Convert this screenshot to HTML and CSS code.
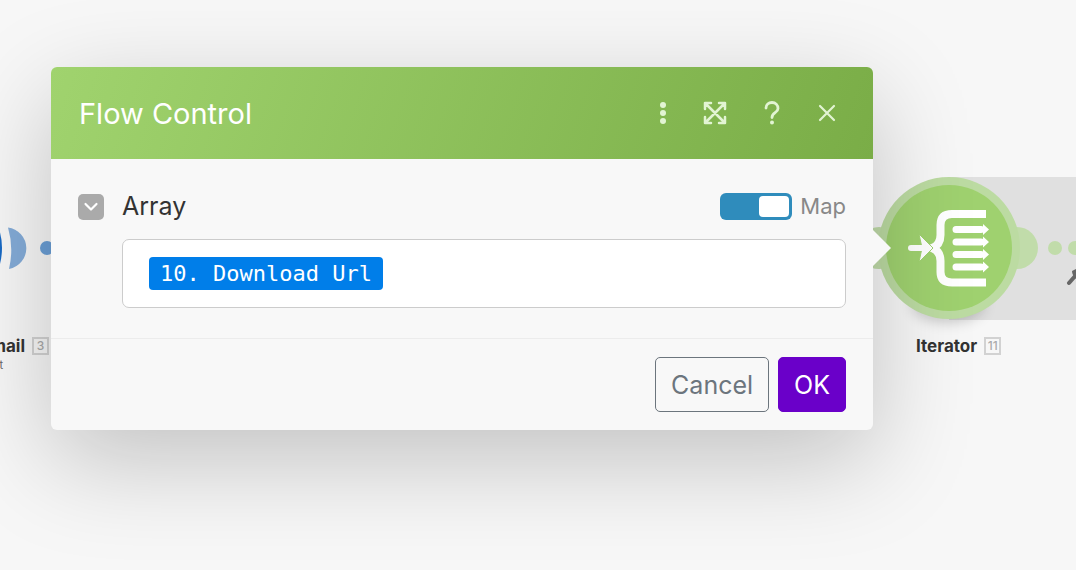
FILE: index.html
```
<!DOCTYPE html>
<html lang="en">

<head>
    <meta charset="UTF-8">
    <meta name="viewport" content="width=device-width, initial-scale=1.0">
    <title>Flow Control</title>
    <link rel="stylesheet" href="styles.css">
</head>

<body>
    <main class="canvas">
        <div class="node node-mail">
            <svg class="shape" width="60" height="60" viewBox="0 0 60 60">
                <path d="M7 7.500A21 21 0 0 1 8 49Q13 28 7 7.500Z" transform="translate(1 0)" fill="#84acd8" />
                <circle cx="-61" cy="28" r="63" fill="#1769c5" />
                <circle cx="47" cy="28" r="7" fill="#6b9fd6" />
            </svg>
            <div class="node-label">Gmail <span class="count">3</span></div>
            <div class="node-note">Sent</div>
        </div>

        <div class="node node-iterator">
            <svg class="shape" width="216" height="170" viewBox="0 0 216 170">
                <defs>
                    <filter id="soft" x="-50%" y="-100%" width="200%" height="300%">
                        <feGaussianBlur stdDeviation="7" />
                    </filter>
                </defs>
                <rect x="89" y="17" width="127" height="143" fill="#e0e0e0" />
                <ellipse cx="88" cy="145" rx="36" ry="17" fill="#000" opacity=".2" filter="url(#soft)" />
                <circle cx="19" cy="88" r="21" fill="#c1dcaa" />
                <circle cx="157" cy="88" r="21" fill="#c1dcaa" />
                <circle cx="195" cy="88" r="7" fill="#c1dcaa" />
                <circle cx="215" cy="88" r="7" fill="#c1dcaa" />
                <circle cx="89" cy="88" r="71" fill="#bcdba2" />
                <circle cx="89" cy="88" r="63" fill="#9fd16f" />
                <g fill="none" stroke="#fff" stroke-width="8">
                    <path d="M126 54H92Q80.500 54 80.500 65V75Q80.500 85 72 88Q80.500 91 80.500 101V112Q80.500 122.500 92 122.500H126" />
                    <path d="M96 69.500H121M96 82H121M96 94.500H121M96 107H121" stroke-width="7" stroke-linecap="round" />
                </g>
                <path d="M59 74L73 88L59 102L62 88Z" fill="#fff" stroke="#9fd16f" />
                <path d="M51 88H65" stroke="#fff" stroke-width="6" stroke-linecap="round" />
                <path d="M123 64L129 69.500L123 75ZM123 76.500L129 82L123 87.500ZM123 89L129 94.500L123 100ZM123 101.500L129 107L123 112.500Z" fill="#fff" />
                <path d="M209 123L216 115" stroke="#666" stroke-width="4" stroke-linecap="round" />
                <path d="M212 111Q212 115 216 119V109Z" fill="#666" />
            </svg>
            <div class="node-label">Iterator <span class="count">11</span></div>
        </div>

        <form class="dialog">
            <header class="dialog-header">
                <h1>Flow Control</h1>
                <div class="tools">
                    <button type="button" aria-label="More">
                        <svg width="16" height="24" viewBox="0 0 16 24" fill="currentColor">
                            <circle cx="8" cy="4" r="3" />
                            <circle cx="8" cy="12" r="3" />
                            <circle cx="8" cy="20" r="3" />
                        </svg>
                    </button>
                    <button type="button" aria-label="Expand">
                        <svg width="24" height="24" viewBox="0 0 24 24" fill="none" stroke="currentColor" stroke-width="2.500" stroke-linecap="round" stroke-linejoin="round">
                            <path d="M2 2L22 22M22 2L2 22M2 8V2H8M16 2H22V8M22 16V22H16M8 22H2V16" />
                        </svg>
                    </button>
                    <button type="button" aria-label="Help">
                        <svg width="24" height="24" viewBox="0 0 24 24" fill="none" stroke="currentColor" stroke-width="2.800" stroke-linecap="round">
                            <path d="M7 7C7 3.500 9.500 1.500 13 1.500S19 4 19 7.500C19 12 13 11.500 13 16.500" />
                            <circle cx="13" cy="21.500" r="2" fill="currentColor" stroke="none" />
                        </svg>
                    </button>
                    <button type="button" aria-label="Close">
                        <svg width="24" height="24" viewBox="0 0 24 24" fill="none" stroke="currentColor" stroke-width="2.200" stroke-linecap="round">
                            <path d="M5 5L19 19M19 5L5 19" />
                        </svg>
                    </button>
                </div>
            </header>

            <section class="dialog-body">
                <button class="collapse" type="button" aria-label="Collapse">
                    <svg width="26" height="26" viewBox="0 0 26 26" fill="none" stroke="#fff" stroke-width="2.200" stroke-linecap="round" stroke-linejoin="round">
                        <path d="M7.500 10L13 15.500L18.500 10" />
                    </svg>
                </button>
                <div class="field">
                    <div class="field-head">
                        <span class="field-name" id="array">Array</span>
                        <label class="map"><input class="switch" type="checkbox" checked>Map</label>
                    </div>
                    <div class="value" role="textbox" contenteditable="true" aria-labelledby="array"><span class="tag" contenteditable="false">10. Download Url</span></div>
                </div>
            </section>

            <footer class="dialog-footer">
                <button class="btn btn-cancel" type="button">Cancel</button>
                <button class="btn btn-ok" type="submit">OK</button>
            </footer>
        </form>
    </main>
</body>

</html>
```
FILE: styles.css
```
* {
    box-sizing: border-box;
}

body {
    margin: 0;
    background-color: #f7f7f7;
    color: #333;
    font-family: Inter, "Liberation Sans", sans-serif;
}

button {
    padding: 0;
    border: 0;
    background: none;
    color: inherit;
    font: inherit;
    cursor: pointer;
}

svg {
    display: block;
}

.canvas {
    position: relative;
    min-height: 100vh;
    padding: 67px 203px 40px 51px;
    overflow: hidden;
}

/* modules on the scenario canvas */
.node {
    position: absolute;
}

.node-mail {
    top: 220px;
    left: 0;
    width: 51px;
}

.node-iterator {
    top: 160px;
    right: 0;
    width: 216px;
}

.shape {
    overflow: visible;
}

.node-label {
    display: flex;
    align-items: center;
    gap: 7px;
    font-size: 17px;
    font-weight: 700;
    line-height: 20px;
    white-space: nowrap;
}

.node-mail .node-label {
    justify-content: flex-end;
    margin-top: 56px;
    padding-right: 2px;
}

.node-iterator .node-label {
    margin-top: 6px;
    padding-left: 56px;
}

.node-note {
    display: flex;
    justify-content: flex-end;
    width: 3px;
    margin-top: 2px;
    color: #666;
    font-size: 11px;
    line-height: 14px;
}

.count {
    min-width: 17px;
    border: 2px solid #d2d2d2;
    color: #aaa;
    font-size: 12px;
    font-weight: 500;
    line-height: 14px;
    text-align: center;
}

.dialog {
    position: relative;
    border-radius: 6px;
    background-color: #f8f8f8;
    box-shadow: 0 30px 100px rgba(0, 0, 0, 0.22);
}

.dialog::after {
    content: "";
    position: absolute;
    top: 163px;
    left: 100%;
    border: 18px solid transparent;
    border-left-color: #f8f8f8;
    border-right-width: 0;
}

.dialog-header {
    display: flex;
    align-items: center;
    justify-content: space-between;
    height: 92px;
    padding: 0 34px 0 28px;
    border-radius: 6px 6px 0 0;
    background: linear-gradient(110deg, #a0d36e, #7aad47);
    color: #fff;
}

.dialog-header h1 {
    margin: 0;
    font-size: 29px;
    font-weight: 400;
}

.tools {
    display: flex;
    gap: 32px;
    color: #e2f4d3;
}

.dialog-body {
    display: flex;
    gap: 18px;
    padding: 26px 27px 30px;
}

.collapse {
    align-self: flex-start;
    margin-top: 9px;
    border-radius: 5px;
    background-color: #aaa;
}

.field {
    flex: 1;
}

.field-head {
    display: flex;
    align-items: center;
    justify-content: space-between;
    height: 42px;
    margin-bottom: 12px;
}

.field-name {
    font-size: 25px;
    font-weight: 400;
}

.map {
    display: flex;
    align-items: center;
    gap: 8px;
    color: #888;
    font-size: 22px;
    font-weight: 400;
}

.switch {
    appearance: none;
    display: flex;
    justify-content: flex-end;
    width: 72px;
    height: 27px;
    margin: 0;
    padding: 3px;
    border-radius: 6px;
    background-color: #2f8cbc;
}

.switch::before {
    content: "";
    width: 30px;
    border-radius: 4px;
    background-color: #fff;
}

.value {
    display: flex;
    padding: 17px 26px;
    border: 1px solid #ccc;
    border-radius: 7px;
    background-color: #fff;
}

.tag {
    padding: 0 11px;
    border-radius: 4px;
    background-color: #007ee9;
    color: #fff;
    font-family: "DejaVu Sans Mono", monospace;
    font-size: 22px;
    line-height: 33px;
}

.dialog-footer {
    display: flex;
    justify-content: flex-end;
    gap: 9px;
    padding: 18px 27px;
    border-top: 1px solid #ececec;
}

.btn {
    height: 55px;
    padding: 0 15px;
    border: 1px solid #6c757d;
    border-radius: 5px;
    color: #6c757d;
    font-size: 25px;
    font-weight: 400;
}

.btn-ok {
    border-color: #6a00c9;
    background-color: #6a00c9;
    color: #fff;
}
```
